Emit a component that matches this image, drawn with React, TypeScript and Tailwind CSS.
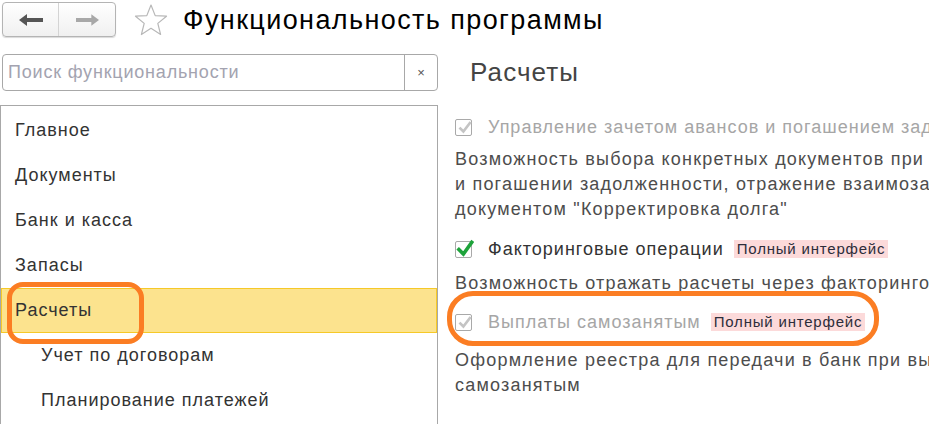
import React from 'react';

const sections = ['Главное', 'Документы', 'Банк и касса', 'Запасы', 'Расчеты'];
const subsections = ['Учет по договорам', 'Планирование платежей'];

function Checkbox({ active }: { active?: boolean }) {
  return (
    <span className="relative inline-block w-[17px] h-[17px] shrink-0 rounded-[2px] border border-[#a9a9a9] bg-white">
      <svg viewBox="0 0 17 17" className="absolute -left-[1px] -top-[3px] w-[19px] h-[19px]">
        {active ? (
          <path d="M3.5 9.5 L7.5 13.5 L15 3" fill="none" stroke="#1ea33b" strokeWidth="3.2" strokeLinecap="square" />
        ) : (
          <path d="M4 9.5 L7.5 13 L14 4.5" fill="none" stroke="#c4c4c4" strokeWidth="2.4" />
        )}
      </svg>
    </span>
  );
}

function Badge() {
  return (
    <span className="ml-[10px] px-[3px] bg-[#fcdada] text-[#2d2d3a] text-[15px] leading-[18px] tracking-[0.8px]">
      Полный интерфейс
    </span>
  );
}

export default function App() {
  return (
    <div className="relative w-[929px] h-[424px] overflow-hidden bg-white font-['Liberation_Sans',Arial,sans-serif] text-[#333]">
      {/* Header */}
      <div className="flex items-center h-[38px] pl-[2px] pt-[1px]">
        <div className="flex h-[35px] w-[114px] rounded-[4px] border border-[#b4b4b4] bg-gradient-to-b from-white to-[#f0f0f0] shadow-[0_1px_1px_rgba(0,0,0,0.15)]">
          <div className="flex w-[56px] items-center justify-center border-r border-[#d4d4d4]">
            <svg viewBox="0 0 24 12" className="w-[24px] h-[12px]">
              <path d="M0 6 L8 0 L8 4 L24 4 L24 8 L8 8 L8 12 Z" fill="#555" />
            </svg>
          </div>
          <div className="flex flex-1 items-center justify-center">
            <svg viewBox="0 0 24 12" className="w-[23px] h-[12px]">
              <path d="M24 6 L16 0 L16 4 L0 4 L0 8 L16 8 L16 12 Z" fill="#a8a8a8" />
            </svg>
          </div>
        </div>
        <svg viewBox="0 0 34 34" className="ml-[18px] w-[34px] h-[34px]">
          <path
            d="M17 2 L21.2 12.6 L32.5 13.2 L23.8 20.4 L26.6 31.5 L17 25.3 L7.4 31.5 L10.2 20.4 L1.5 13.2 L12.8 12.6 Z"
            fill="none"
            stroke="#b8b8b8"
            strokeWidth="1.2"
            strokeLinejoin="round"
          />
        </svg>
        <h1 className="ml-[15px] text-[27px] leading-[30px] tracking-[1.4px] text-black">Функциональность программы</h1>
      </div>

      {/* Body */}
      <div className="flex">
        {/* Left column */}
        <div className="w-[438px] shrink-0 pt-[16px]">
          <div className="ml-[2px] flex h-[37px] rounded-[4px] border border-[#a8a8a8] bg-white">
            <div className="flex flex-1 items-center pl-[5px] text-[18px] tracking-[0.8px] text-[#a3a3b0]">Поиск функциональности</div>
            <div className="flex w-[33px] items-center justify-center border-l border-[#a8a8a8] text-[13px] text-[#555]">×</div>
          </div>
          <div className="mt-[14px] h-[400px] border border-[#a8a8a8] pt-[2px] text-[18px] tracking-[1px]">
            {sections.map((s) => (
              <div
                key={s}
                className={
                  s === 'Расчеты'
                    ? 'flex h-[45px] items-center border border-[#f6c928] bg-[#fce38e] pl-[13px]'
                    : 'flex h-[45px] items-center pl-[14px]'
                }
              >
                {s}
              </div>
            ))}
            {subsections.map((s) => (
              <div key={s} className="flex h-[45px] items-center pl-[40px]">
                {s}
              </div>
            ))}
          </div>
        </div>

        {/* Right column */}
        <div className="flex-1 pl-[17px] pt-[16px] whitespace-nowrap">
          <h2 className="ml-[15px] h-[37px] flex items-center text-[26px] tracking-[1.1px] text-[#444]">Расчеты</h2>
          <div className="mt-[21px] text-[18px] tracking-[1px]">
            <div className="flex h-[30px] items-center gap-[16px] text-[#a6a6a6]">
              <Checkbox />
              <span>Управление зачетом авансов и погашением задолженности</span>
            </div>
            <div className="mt-[5px] leading-[25px] tracking-[1.2px] text-[#4d4d4d]">
              <div>Возможность выбора конкретных документов при зачете авансов</div>
              <div>и погашении задолженности, отражение взаимозачетов</div>
              <div>документом "Корректировка долга"</div>
            </div>
            <div className="mt-[12px] flex h-[30px] items-center gap-[16px]">
              <Checkbox active />
              <span className="flex items-center">
                Факторинговые операции
                <Badge />
              </span>
            </div>
            <div className="mt-[7px] leading-[25px] tracking-[1.2px] text-[#4d4d4d]">
              Возможность отражать расчеты через факторинговые компании
            </div>
            <div className="mt-[11px] flex h-[30px] items-center gap-[16px] text-[#a6a6a6]">
              <Checkbox />
              <span className="flex items-center">
                Выплаты самозанятым
                <Badge />
              </span>
            </div>
            <div className="mt-[11px] leading-[25px] tracking-[1.2px] text-[#4d4d4d]">
              <div>Оформление реестра для передачи в банк при выплатах</div>
              <div>самозанятым</div>
            </div>
          </div>
        </div>
      </div>

      {/* Annotations */}
      <div className="absolute left-[7px] top-[282px] h-[62px] w-[137px] rounded-[16px] border-[5px] border-[#fb7d23]" />
      <div className="absolute left-[447px] top-[291px] h-[55px] w-[432px] rounded-[26px] border-[5px] border-[#fb7d23]" />
    </div>
  );
}
